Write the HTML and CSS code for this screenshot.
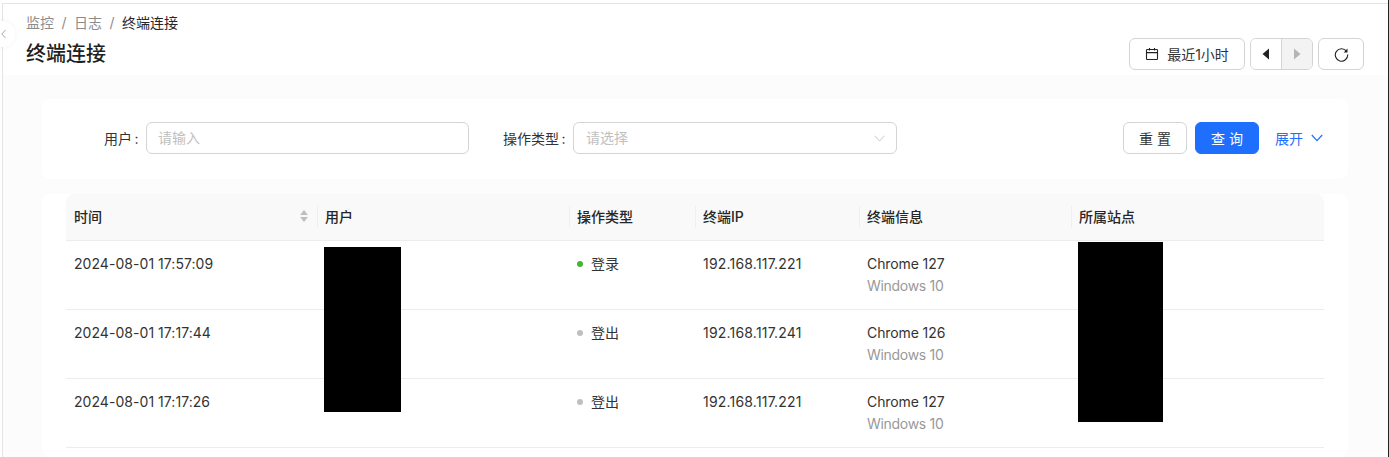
FILE: index.html
```html
<!DOCTYPE html>
<html lang="zh-CN">
<head>
    <meta charset="UTF-8">
    <meta name="viewport" content="width=device-width, initial-scale=1.0">
    <title>终端连接</title>
    <link rel="stylesheet" href="styles.css">
</head>
<body>
    <div class="main">
        <button class="collapse" aria-label="收起">
            <svg width="8" height="10" viewBox="0 0 8 10"><path d="M5.5 1 1.8 5l3.7 4" fill="none" stroke="#aaa" stroke-width="1"/></svg>
        </button>

        <header class="page-head">
            <div>
                <div class="crumbs">
                    <span>监控</span><i>/</i><span>日志</span><i>/</i><b>终端连接</b>
                </div>
                <h1>终端连接</h1>
            </div>
            <div class="tools">
                <button class="btn btn-range">
                    <svg width="14" height="14" viewBox="0 0 14 14" fill="none" stroke="#222" stroke-width="1.1"><rect x="1.5" y="2.5" width="11" height="10" rx=".8"/><path d="M1.5 5.6h11M4.5 1v2.6M9.5 1v2.6"/></svg>
                    最近1小时
                </button>
                <div class="btn-group">
                    <button class="btn-step">
                        <svg width="8" height="12" viewBox="0 0 8 12"><path d="M7 0.5v11L0.5 6z" fill="#222"/></svg>
                    </button>
                    <button class="btn-step is-disabled">
                        <svg width="8" height="12" viewBox="0 0 8 12"><path d="M1 0.5v11L7.5 6z" fill="#b5b5b5"/></svg>
                    </button>
                </div>
                <button class="btn btn-refresh" aria-label="刷新">
                    <svg width="15" height="15" viewBox="0 0 15 15" fill="none"><path d="M12.6 4.4A6.2 6.2 0 1 0 13.7 7.5" stroke="#222" stroke-width="1.1"/><path d="M13.5 1.6v3.8H9.7z" fill="#222"/></svg>
                </button>
            </div>
        </header>

        <div class="content">
            <form class="search-card">
                <div class="field">
                    <label>用户<span class="colon">:</span></label>
                    <div class="input">请输入</div>
                </div>
                <div class="field">
                    <label>操作类型<span class="colon">:</span></label>
                    <div class="input input-select">
                        请选择
                        <svg width="11" height="7" viewBox="0 0 11 7"><path d="M.5.7 5.500 6l5-5.300" fill="none" stroke="#c8c8c8" stroke-width="1"/></svg>
                    </div>
                </div>
                <div class="actions">
                    <button type="button" class="btn btn-form">重 置</button>
                    <button type="button" class="btn btn-form btn-primary">查 询</button>
                    <a class="expand">展开
                        <svg width="12" height="8" viewBox="0 0 12 8"><path d="M.8 1 6 6.600 11.200 1" fill="none" stroke="#1f6fff" stroke-width="1.200"/></svg>
                    </a>
                </div>
            </form>

            <div class="table-card">
                <div class="table-wrap">
                    <table class="log-table">
                        <colgroup>
                            <col class="col-time"><col class="col-user"><col class="col-type">
                            <col class="col-ip"><col class="col-info"><col class="col-site">
                        </colgroup>
                        <thead>
                            <tr>
                                <th>
                                    <span class="th-sort">时间
                                        <svg width="10" height="14" viewBox="0 0 10 14"><path d="M5 1 9 6H1zM5 13 1 8h8z" fill="#bfbfbf"/></svg>
                                    </span>
                                </th>
                                <th>用户</th>
                                <th>操作类型</th>
                                <th>终端IP</th>
                                <th>终端信息</th>
                                <th>所属站点</th>
                            </tr>
                        </thead>
                        <tbody>
                            <tr>
                                <td class="time">2024-08-01 17:57:09</td>
                                <td></td>
                                <td><span class="dot dot-on"></span>登录</td>
                                <td class="ip">192.168.117.221</td>
                                <td class="info">Chrome 127<div class="sub">Windows 10</div></td>
                                <td></td>
                            </tr>
                            <tr>
                                <td class="time">2024-08-01 17:17:44</td>
                                <td></td>
                                <td><span class="dot"></span>登出</td>
                                <td class="ip">192.168.117.241</td>
                                <td class="info">Chrome 126<div class="sub">Windows 10</div></td>
                                <td></td>
                            </tr>
                            <tr>
                                <td class="time">2024-08-01 17:17:26</td>
                                <td></td>
                                <td><span class="dot"></span>登出</td>
                                <td class="ip">192.168.117.221</td>
                                <td class="info">Chrome 127<div class="sub">Windows 10</div></td>
                                <td></td>
                            </tr>
                        </tbody>
                    </table>
                    <div class="mask mask-user"></div>
                    <div class="mask mask-site"></div>
                </div>
            </div>
        </div>
    </div>
</body>
</html>
```

FILE: styles.css
```css
* {
    box-sizing: border-box;
}
html, body {
    height: 100%;
}
body {
    margin: 0;
    overflow: hidden;
    background-color: #fff;
    color: #333;
    font-family: Inter, 'Noto Sans CJK SC', sans-serif;
    font-size: 14px;
    padding: 3px 0 0 2px;
    border-right: 1px solid #222;
}
button {
    font: inherit;
    color: inherit;
    cursor: pointer;
}
svg {
    display: block;
    flex: none;
}
.main {
    position: relative;
    height: 100%;
    border-top: 1px solid #e4e4e4;
    border-left: 1px solid #e4e4e4;
}
.collapse {
    position: absolute;
    left: -14px;
    top: 17px;
    width: 26px;
    height: 26px;
    padding: 0 0 0 11px;
    border: none;
    border-radius: 50%;
    background-color: #fff;
    box-shadow: 0 0 6px rgba(0, 0, 0, 0.05);
}

.page-head {
    height: 71px;
    padding: 7px 24px 0 23px;
    display: flex;
    justify-content: space-between;
}
.crumbs {
    display: flex;
    align-items: center;
    height: 22px;
    color: #8c8c8c;
}
.crumbs i {
    font-style: normal;
    margin: 0 7.5px;
}
.crumbs b {
    font-weight: 400;
    color: #262626;
}
h1 {
    margin: 7px 0 0;
    font-size: 20px;
    line-height: 28px;
    font-weight: 500;
    color: #1f1f1f;
}
.tools {
    display: flex;
    gap: 5px;
    padding-top: 27px;
}
.btn {
    height: 32px;
    border: 1px solid #d4d4d4;
    border-radius: 6px;
    background-color: #fff;
    display: flex;
    align-items: center;
    justify-content: center;
}
.btn-range {
    width: 116px;
    gap: 8px;
}
.btn-group {
    width: 63px;
    height: 32px;
    display: flex;
    border: 1px solid #d4d4d4;
    border-radius: 6px;
    overflow: hidden;
}
.btn-step {
    flex: 1;
    border: none;
    background-color: #fff;
    display: flex;
    align-items: center;
    justify-content: center;
}
.btn-step.is-disabled {
    background-color: #f3f3f3;
    border-left: 1px solid #d4d4d4;
}
.btn-refresh {
    width: 46px;
}

.content {
    background-color: #fcfcfc;
    height: 382px;
    overflow: hidden;
    padding: 24px 40px 0 39px;
}
.search-card {
    height: 80px;
    padding-bottom: 2px;
    background-color: #fff;
    border-radius: 8px;
    display: flex;
    align-items: center;
    margin-bottom: 15px;
}
.field {
    display: flex;
    align-items: center;
}
.field label {
    width: 104px;
    padding-right: 7.5px;
    text-align: right;
}
.colon {
    margin-left: 2.5px;
}
.input {
    width: 323px;
    height: 32px;
    padding: 0 11px;
    border: 1px solid #d4d4d4;
    border-radius: 6px;
    color: #bfbfbf;
    line-height: 30px;
}
.input-select {
    width: 324px;
    padding-left: 12px;
    display: flex;
    align-items: center;
    justify-content: space-between;
}
.actions {
    margin-left: auto;
    padding-right: 25px;
    display: flex;
    align-items: center;
    gap: 8px;
}
.btn-form {
    width: 64px;
}
.btn-primary {
    background-color: #1f6fff;
    border-color: #1f6fff;
    color: #fff;
}
.expand {
    margin-left: 8px;
    display: flex;
    align-items: center;
    gap: 8px;
    color: #1f6fff;
}

.table-card {
    background-color: #fff;
    border-radius: 8px;
    padding: 0 24px;
    height: 263px;
}
.table-wrap {
    position: relative;
}
.log-table {
    width: 100%;
    table-layout: fixed;
    border-collapse: collapse;
}
.col-time { width: 251px; }
.col-user { width: 252px; }
.col-type { width: 126px; }
.col-ip { width: 164px; }
.col-info { width: 212px; }
.log-table th {
    position: relative;
    height: 46px;
    padding: 0 8px 2px;
    text-align: left;
    font-weight: 500;
    color: #262626;
    background-color: #f9f9f9;
    border-bottom: 1px solid #ececec;
}
.log-table th:first-child {
    border-top-left-radius: 8px;
}
.log-table th:last-child {
    border-top-right-radius: 8px;
}
.log-table th + th::before {
    content: "";
    position: absolute;
    left: 0;
    top: 12px;
    height: 22px;
    border-left: 1px solid #efefef;
}
.th-sort {
    display: flex;
    align-items: center;
    justify-content: space-between;
}
.log-table td {
    height: 69px;
    padding: 12px 8px;
    line-height: 22px;
    vertical-align: top;
    border-bottom: 1px solid #ececec;
}
.time {
    letter-spacing: 0.05px;
}
.ip {
    letter-spacing: 0.2px;
}
.info {
    letter-spacing: -0.1px;
}
.sub {
    color: #999;
    letter-spacing: -0.3px;
}
.dot {
    display: inline-block;
    width: 6px;
    height: 6px;
    margin-right: 8px;
    border-radius: 50%;
    background-color: #bfbfbf;
    vertical-align: 2px;
}
.dot-on {
    background-color: #3fb82f;
}
.mask {
    position: absolute;
    background-color: #000;
}
.mask-user {
    left: 258px;
    top: 53px;
    width: 77px;
    height: 165px;
}
.mask-site {
    left: 1012px;
    top: 48px;
    width: 85px;
    height: 180px;
}
```
